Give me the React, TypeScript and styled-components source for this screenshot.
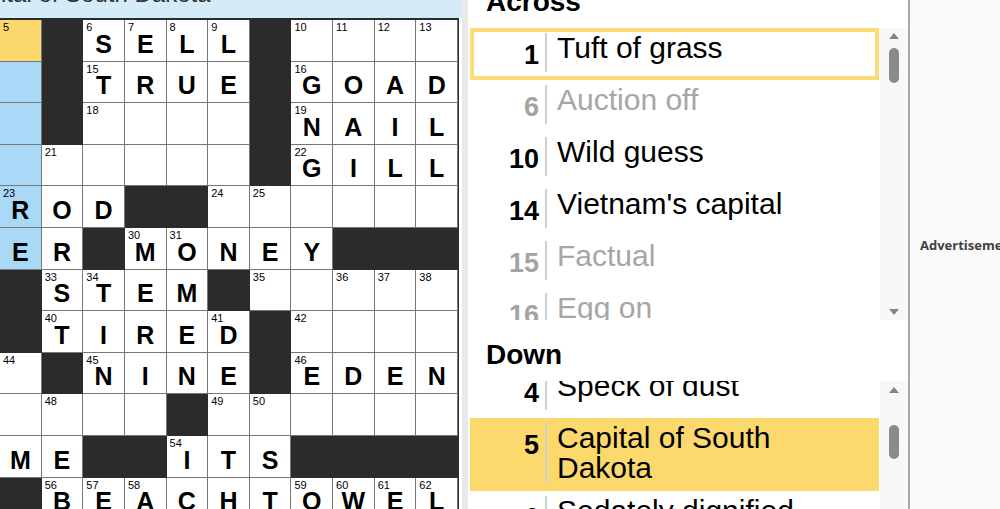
import React from "react";
import styled, { createGlobalStyle } from "styled-components";

const GlobalStyle = createGlobalStyle`
  html, body {
    margin: 0;
    padding: 0;
    background: #fff;
  }
  body {
    font-family: 'Liberation Sans', Arial, sans-serif;
  }
`;

const Viewport = styled.div`
  width: 1000px;
  height: 509px;
  overflow: hidden;
`;

// page is scrolled a little, so the tops of the headers are off screen
const Page = styled.div`
  display: flex;
  height: 542px;
  margin-top: -33px;
`;

const Board = styled.div`
  width: 462px;
  flex-shrink: 0;
  display: flex;
  flex-direction: column;
  overflow: hidden;
`;

const ClueBar = styled.div`
  height: 51px;
  flex-shrink: 0;
  box-sizing: border-box;
  padding-top: 15px;
  background: #d5ebf7;
  overflow: hidden;
  white-space: nowrap;
`;

const ClueBarText = styled.div`
  margin-left: -43px;
  font-size: 24px;
  line-height: 24px;
  color: #333;
`;

const Grid = styled.div`
  width: 459px;
  flex-shrink: 0;
  box-sizing: border-box;
  display: grid;
  grid-template-columns: repeat(11, 1fr);
  grid-auto-rows: 41.6px;
  border-top: 2px solid #2b2b2b;
  border-right: 1px solid #2b2b2b;
`;

type Shade = "white" | "block" | "selected" | "word";

const cellColors: Record<Shade, string> = {
  white: "#fff",
  block: "#2b2b2b",
  selected: "#fbd76c",
  word: "#a9d9f7",
};

const Cell = styled.div<{ $shade: Shade }>`
  display: grid;
  box-sizing: border-box;
  background: ${p => cellColors[p.$shade]};
  border-right: 1px solid ${p => (p.$shade === "block" ? "#2b2b2b" : "#777")};
  border-bottom: 1px solid ${p => (p.$shade === "block" ? "#2b2b2b" : "#777")};
`;

const CellNum = styled.span`
  grid-area: 1 / 1;
  align-self: start;
  justify-self: start;
  padding: 2px 0 0 3px;
  font-size: 11px;
  line-height: 11px;
  color: #000;
`;

const CellLetter = styled.span`
  grid-area: 1 / 1;
  align-self: end;
  justify-self: center;
  padding-bottom: 4px;
  font-size: 25px;
  line-height: 25px;
  font-weight: 700;
  color: #000;
`;

const Gutter = styled.div`
  width: 6px;
  flex-shrink: 0;
  background: #e9e9e9;
`;

const CluePanel = styled.div`
  width: 440px;
  flex-shrink: 0;
  display: flex;
  flex-direction: column;
  border-right: 2px solid #a3abb1;
  background: #fff;
  overflow: hidden;
`;

const SectionTitle = styled.h3`
  margin: 0;
  height: 61px;
  flex-shrink: 0;
  box-sizing: border-box;
  padding: 20px 0 0 18px;
  font-size: 28px;
  line-height: 30px;
  font-weight: 700;
  color: #000;
`;

const ListArea = styled.div`
  display: flex;
  height: 292px;
  flex-shrink: 0;
`;

const ListWindow = styled.div`
  width: 412px;
  box-sizing: border-box;
  padding: 0 1px 0 2px;
  overflow: hidden;
`;

const ListBody = styled.ul<{ $offset: number }>`
  margin: ${p => -p.$offset}px 0 0;
  padding: 0;
  list-style: none;
`;

const ClueRow = styled.li<{ $active?: boolean; $focused?: boolean }>`
  display: flex;
  align-items: stretch;
  min-height: 52px;
  box-sizing: border-box;
  padding: 5px 0 8px;
  background: ${p => (p.$active ? "#fbd96d" : "transparent")};
  box-shadow: ${p => (p.$focused ? "inset 0 0 0 4px #fcdc76" : "none")};
`;

const ClueNum = styled.span<{ $done?: boolean }>`
  width: 69px;
  flex-shrink: 0;
  box-sizing: border-box;
  padding-top: 7px;
  text-align: right;
  font-size: 27px;
  line-height: 30px;
  font-weight: 700;
  color: ${p => (p.$done ? "#a3a3a3" : "#000")};
`;

const Divider = styled.span`
  width: 2px;
  flex-shrink: 0;
  margin-left: 6px;
  background: #d0d0d0;
`;

const ClueText = styled.span<{ $done?: boolean }>`
  margin-left: 10px;
  padding-right: 20px;
  font-size: 30px;
  line-height: 30px;
  color: ${p => (p.$done ? "#a6a6a6" : "#000")};
`;

const Track = styled.div<{ $top: number }>`
  width: 28px;
  flex-shrink: 0;
  box-sizing: border-box;
  display: flex;
  flex-direction: column;
  align-items: center;
  padding: ${p => p.$top}px 0 5px;
  background: #f8f8f8;
`;

const ArrowUp = styled.span`
  width: 0;
  height: 0;
  border-left: 5px solid transparent;
  border-right: 5px solid transparent;
  border-bottom: 6px solid #858585;
`;

const ArrowDown = styled.span`
  width: 0;
  height: 0;
  border-left: 5px solid transparent;
  border-right: 5px solid transparent;
  border-top: 6px solid #858585;
`;

const Thumb = styled.span<{ $gap: number; $len: number }>`
  width: 10px;
  height: ${p => p.$len}px;
  margin-top: ${p => p.$gap}px;
  border-radius: 5px;
  background: #8a8a8a;
`;

const Spacer = styled.span`
  flex: 1;
`;

const AdRail = styled.aside`
  flex: 1;
  min-width: 0;
  display: flex;
  align-items: center;
  padding: 14px 0 0 10px;
  background: #fafafa;
  overflow: hidden;
  white-space: nowrap;
`;

const AdLabel = styled.span`
  font-family: 'Open Sans', 'Liberation Sans', sans-serif;
  font-size: 13px;
  font-weight: 700;
  color: #3c4146;
`;

// '#' = block, '.' = empty square
const rows = [
  ".#SELL#....",
  ".#TRUE#GOAD",
  ".#....#NAIL",
  "......#GILL",
  "ROD##......",
  "ER#MONEY###",
  "#STEM#.....",
  "#TIRED#....",
  ".#NINE#EDEN",
  "....#......",
  "ME##ITS####",
  "#BEACHTOWEL",
];

const numbers: Record<string, number> = {
  "0-0": 5, "0-2": 6, "0-3": 7, "0-4": 8, "0-5": 9, "0-7": 10, "0-8": 11, "0-9": 12, "0-10": 13,
  "1-2": 15, "1-7": 16,
  "2-2": 18, "2-7": 19,
  "3-1": 21, "3-7": 22,
  "4-0": 23, "4-5": 24, "4-6": 25,
  "5-3": 30, "5-4": 31,
  "6-1": 33, "6-2": 34, "6-6": 35, "6-8": 36, "6-9": 37, "6-10": 38,
  "7-1": 40, "7-5": 41, "7-7": 42,
  "8-0": 44, "8-2": 45, "8-7": 46,
  "9-1": 48, "9-5": 49, "9-6": 50,
  "10-4": 54,
  "11-1": 56, "11-2": 57, "11-3": 58, "11-7": 59, "11-8": 60, "11-9": 61, "11-10": 62,
};

type Clue = { n: number; text: string; done?: boolean; active?: boolean; focused?: boolean };

const across: Clue[] = [
  { n: 1, text: "Tuft of grass", focused: true },
  { n: 6, text: "Auction off", done: true },
  { n: 10, text: "Wild guess" },
  { n: 14, text: "Vietnam's capital" },
  { n: 15, text: "Factual", done: true },
  { n: 16, text: "Egg on", done: true },
  { n: 17, text: "Opera solo" },
];

const down: Clue[] = [
  { n: 4, text: "Speck of dust" },
  { n: 5, text: "Capital of South Dakota", active: true },
  { n: 6, text: "Sedately dignified" },
  { n: 7, text: "Sharp edge" },
];

const shadeFor = (r: number, c: number, ch: string): Shade => {
  if (ch === "#") return "block";
  if (c === 0 && r === 0) return "selected";
  if (c === 0 && r <= 5) return "word";
  return "white";
};

const ClueList = ({
  clues,
  offset,
  arrowTop,
  thumbGap,
  thumbLen,
}: {
  clues: Clue[];
  offset: number;
  arrowTop: number;
  thumbGap: number;
  thumbLen: number;
}) => (
  <ListArea>
    <ListWindow>
      <ListBody $offset={offset}>
        {clues.map(clue => (
          <ClueRow key={clue.n} $active={clue.active} $focused={clue.focused}>
            <ClueNum $done={clue.done}>{clue.n}</ClueNum>
            <Divider />
            <ClueText $done={clue.done}>{clue.text}</ClueText>
          </ClueRow>
        ))}
      </ListBody>
    </ListWindow>
    <Track $top={arrowTop}>
      <ArrowUp />
      <Thumb $gap={thumbGap} $len={thumbLen} />
      <Spacer />
      <ArrowDown />
    </Track>
  </ListArea>
);

const App: React.FC = () => (
  <Viewport>
    <GlobalStyle />
    <Page>
      <Board>
        <ClueBar>
          <ClueBarText>Capital of South Dakota</ClueBarText>
        </ClueBar>
        <Grid>
          {rows.map((row, r) =>
            row.split("").map((ch, c) => {
              const num = numbers[`${r}-${c}`];
              return (
                <Cell key={`${r}-${c}`} $shade={shadeFor(r, c, ch)}>
                  {num && <CellNum>{num}</CellNum>}
                  {ch !== "#" && ch !== "." && <CellLetter>{ch}</CellLetter>}
                </Cell>
              );
            })
          )}
        </Grid>
      </Board>
      <Gutter />
      <CluePanel>
        <SectionTitle>Across</SectionTitle>
        <ClueList clues={across} offset={0} arrowTop={5} thumbGap={9} thumbLen={35} />
        <SectionTitle>Down</SectionTitle>
        <ClueList clues={down} offset={15} arrowTop={6} thumbGap={32} thumbLen={34} />
      </CluePanel>
      <AdRail>
        <AdLabel>Advertisement</AdLabel>
      </AdRail>
    </Page>
  </Viewport>
);

export default App;
